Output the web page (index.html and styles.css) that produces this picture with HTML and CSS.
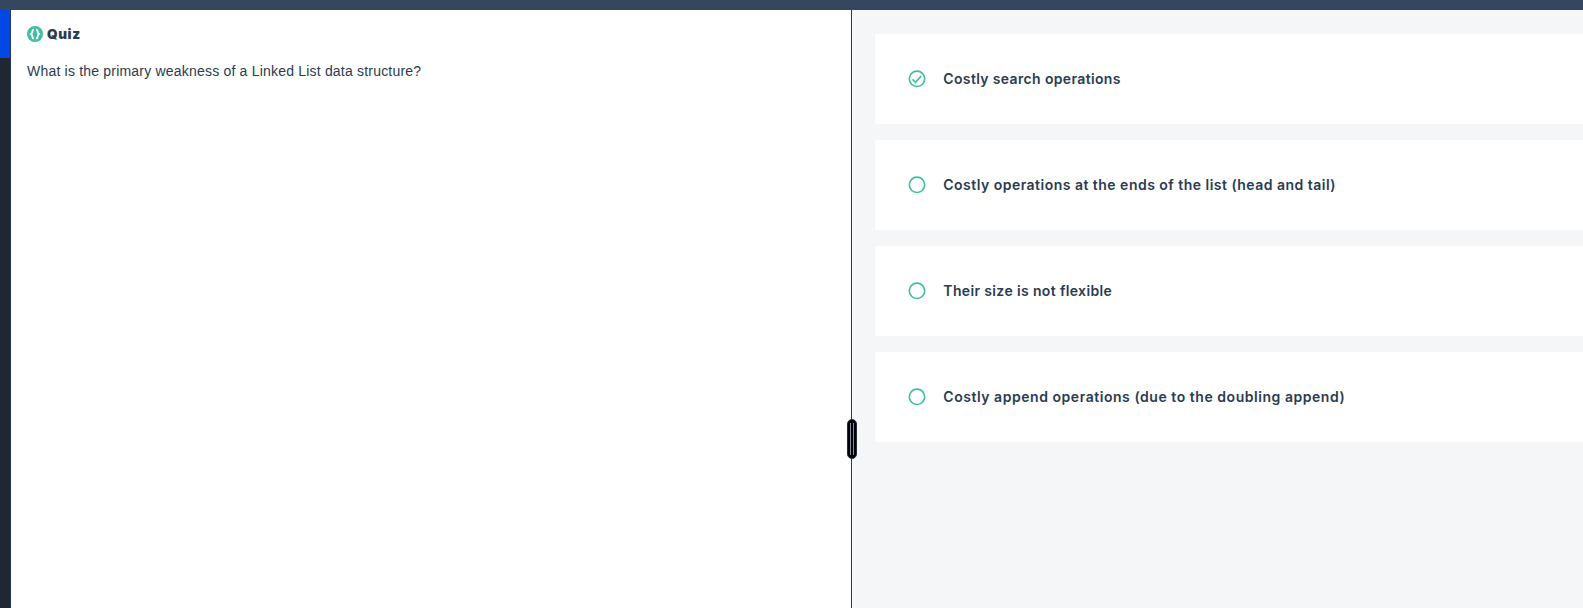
FILE: index.html
```html
<!DOCTYPE html>
<html lang="en">
<head>
<meta charset="utf-8">
<title>Quiz</title>
<link rel="stylesheet" href="styles.css">
</head>
<body>
<header class="topbar"></header>
<div class="workspace">
  <nav class="rail"><div class="rail-active"></div></nav>
  <main class="question">
    <h1 class="title">
      <svg class="logo" viewBox="0 0 16 16"><circle cx="8" cy="8" r="8" fill="#42bda1"/><path d="M6.9 3.3Q5.5 3.7 5.3 5.6Q5.2 7.3 4 8Q5.2 8.7 5.3 10.4Q5.5 12.3 6.9 12.7M9.1 3.3Q10.5 3.7 10.7 5.6Q10.8 7.3 12 8Q10.8 8.7 10.7 10.4Q10.5 12.3 9.1 12.7" fill="none" stroke="#fff" stroke-width="1.8"/></svg>
      <span class="title-text">Quiz</span>
    </h1>
    <p class="prompt">What is the primary weakness of a Linked List data structure?</p>
  </main>
  <div class="divider">
    <div class="handle"><i class="grip"></i><i class="grip"></i></div>
  </div>
  <section class="answers">
    <div class="card">
      <svg class="radio" viewBox="0 0 18 18"><circle cx="9" cy="8.8" r="7.7"/><path d="M4.5 9.4L7.5 12.3L13.1 6.1"/></svg>
      <span class="label label-1">Costly search operations</span>
    </div>
    <div class="card">
      <svg class="radio" viewBox="0 0 18 18"><circle cx="9" cy="8.8" r="7.7"/></svg>
      <span class="label label-2">Costly operations at the ends of the list (head and tail)</span>
    </div>
    <div class="card">
      <svg class="radio" viewBox="0 0 18 18"><circle cx="9" cy="8.8" r="7.7"/></svg>
      <span class="label label-3">Their size is not flexible</span>
    </div>
    <div class="card">
      <svg class="radio" viewBox="0 0 18 18"><circle cx="9" cy="8.8" r="7.7"/></svg>
      <span class="label label-4">Costly append operations (due to the doubling append)</span>
    </div>
  </section>
</div>
</body>
</html>
```
FILE: styles.css
```css
* { box-sizing: border-box; }
body {
  margin: 0;
  height: 608px;
  overflow: hidden;
  display: flex;
  flex-direction: column;
  background: #fff;
  color: #2a3b52;
}
.topbar { height: 10px; flex: none; background: #34475e; }
.workspace { flex: 1; display: flex; }
.rail {
  width: 11px;
  flex: none;
  background: #202731;
  border-right: 1px solid #26384f;
}
.rail-active { height: 48px; background: #0049e6; }
.question { width: 840px; flex: none; padding: 16px; background: #fff; }
.title {
  margin: 0;
  height: 16px;
  display: flex;
  align-items: center;
  gap: 4px;
  font: 900 13.5px/16px Inter, sans-serif;
}
.title-text { letter-spacing: 0.6px; }
.logo { width: 16px; height: 16px; }
.prompt {
  margin: 19px 0 0;
  font: 14px/20px "Liberation Sans", Arial, sans-serif;
  letter-spacing: 0.2px;
  white-space: nowrap;
}
.divider { width: 1px; flex: none; background: #2b3a50; position: relative; }
.handle {
  position: absolute;
  left: -4px;
  top: 409px;
  width: 10px;
  height: 40px;
  display: flex;
  justify-content: center;
  gap: 2px;
  padding: 3px 0;
  border-radius: 5px;
  background: #000;
  border: 1px solid #1c2c40;
}
.grip { width: 1px; background: #7890aa; }
.answers {
  flex: 1;
  padding: 24px 0 0 23px;
  display: flex;
  flex-direction: column;
  gap: 16px;
  background: #f4f6f8;
}
.card {
  height: 90px;
  display: flex;
  align-items: center;
  gap: 17.3px;
  padding-left: 33px;
  border-radius: 2px 0 0 2px;
  background: #fff;
}
.radio {
  width: 18px;
  height: 18px;
  flex: none;
  fill: none;
  stroke: #42bda1;
  stroke-width: 1.6;
}
.label {
  font: 600 14px/20px Inter, sans-serif;
  white-space: nowrap;
}
.label-1 { letter-spacing: 0.35px; }
.label-2 { letter-spacing: 0.48px; }
.label-3 { letter-spacing: 0.36px; }
.label-4 { letter-spacing: 0.54px; }
```
